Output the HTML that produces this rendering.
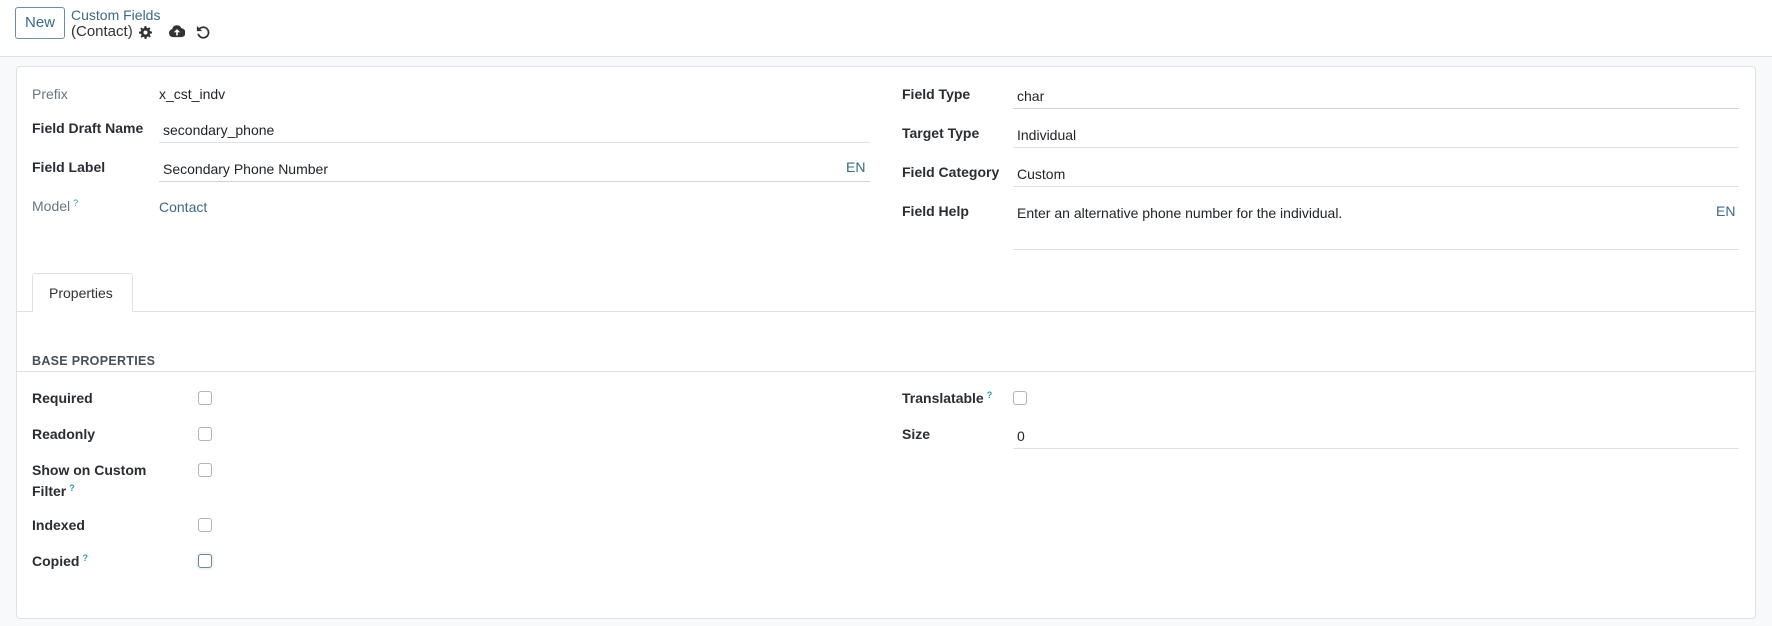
<!DOCTYPE html>
<html><head><meta charset="utf-8">
<style>
*{box-sizing:border-box;margin:0;padding:0}
body{width:1772px;height:626px;overflow:hidden;background:#f8f9fa;font-family:"Liberation Sans",sans-serif;font-size:14px;color:#212529;position:relative}
.hdr{position:absolute;left:0;top:0;width:1772px;height:57px;background:#fff;border-bottom:1px solid #dee2e6}
.card{position:absolute;left:16px;top:66px;width:1740px;height:553px;background:#fff;border:1px solid #dee2e6;border-radius:4px}
.t{position:absolute;line-height:20px;height:20px;white-space:nowrap}
.lb{font-weight:bold;color:#2a2d31}
.g{color:#6c757d}
.lk{color:#3d6a84}
.ul{position:absolute;height:1px;background:#dee2e6}
.q{color:#2a9bb0;font-size:9px;vertical-align:top;position:relative;top:-3px;margin-left:3px}
.cb{position:absolute;width:14px;height:14px;border:1px solid #adb5bd;border-radius:3px;background:#fff}
</style></head><body>
<div class="hdr">
  <div style="position:absolute;left:15px;top:7px;width:50px;height:32px;border:1px solid #6d8ea0;border-radius:3px;color:#3d6a84;font-size:15px;line-height:30px;text-align:center">New</div>
  <div class="t lk" style="left:71px;top:5px">Custom Fields</div>
  <div class="t" style="left:71px;top:22px;font-size:15px;color:#333">(Contact)</div>
  <svg style="position:absolute;left:139px;top:26px" width="13" height="13" viewBox="0 0 16 16"><path fill="#333" d="M7 0h2l.4 2.2 1.5.6 1.8-1.3 1.4 1.4-1.3 1.8.6 1.5L16 7v2l-2.2.4-.6 1.5 1.3 1.8-1.4 1.4-1.8-1.3-1.5.6L9 16H7l-.4-2.2-1.5-.6-1.8 1.3-1.4-1.4 1.3-1.8-.6-1.5L0 9V7l2.2-.4.6-1.5L1.5 3.3l1.4-1.4 1.8 1.3 1.5-.6zM8 5.5A2.5 2.5 0 1 0 8 10.5 2.5 2.5 0 1 0 8 5.5z"/></svg>
  <svg style="position:absolute;left:169px;top:25px" width="16" height="13" viewBox="0 0 20 16"><path fill="#333" d="M5 15a5 5 0 0 1-1-9.9A6 6 0 0 1 15.5 4 5.5 5.5 0 0 1 15 15zM10 5l-4 4h3v4h2V9h3z"/></svg>
  <svg style="position:absolute;left:196px;top:25px" width="14" height="14" viewBox="0 0 16 16"><path fill="none" stroke="#333" stroke-width="2" d="M3.5 5A6 6 0 1 1 2.5 10"/><path fill="#333" d="M1 1v6h6z"/></svg>
</div>
<div class="card"></div>

<div class="t g" style="left:32px;top:84px">Prefix</div>
<div class="t" style="left:159px;top:84px">x_cst_indv</div>
<div class="t lb" style="left:32px;top:118px">Field Draft Name</div>
<div class="t" style="left:163px;top:120px">secondary_phone</div>
<div class="ul" style="left:159px;top:142px;width:711px"></div>
<div class="t lb" style="left:32px;top:157px">Field Label</div>
<div class="t" style="left:163px;top:159px">Secondary Phone Number</div>
<div class="t lk" style="left:846px;top:157px">EN</div>
<div class="ul" style="left:159px;top:181px;width:711px;background:#ced4da"></div>
<div class="t g" style="left:32px;top:196px">Model<span class="q">?</span></div>
<div class="t lk" style="left:159px;top:197px">Contact</div>

<div class="t lb" style="left:902px;top:84px">Field Type</div>
<div class="t" style="left:1017px;top:86px">char</div>
<div class="ul" style="left:1013px;top:108px;width:726px;background:#ced4da"></div>
<div class="t lb" style="left:902px;top:123px">Target Type</div>
<div class="t" style="left:1017px;top:125px">Individual</div>
<div class="ul" style="left:1013px;top:147px;width:726px"></div>
<div class="t lb" style="left:902px;top:162px">Field Category</div>
<div class="t" style="left:1017px;top:164px">Custom</div>
<div class="ul" style="left:1013px;top:186px;width:726px"></div>
<div class="t lb" style="left:902px;top:201px">Field Help</div>
<div class="t" style="left:1017px;top:203px">Enter an alternative phone number for the individual.</div>
<div class="t lk" style="left:1716px;top:201px">EN</div>
<div class="ul" style="left:1013px;top:249px;width:726px"></div>

<div class="ul" style="left:17px;top:311px;width:1738px"></div>
<div style="position:absolute;left:32px;top:273px;width:101px;height:39px;background:#fff;border:1px solid #dee2e6;border-bottom:none;border-radius:3px 3px 0 0"></div>
<div class="t" style="left:49px;top:283px;color:#333">Properties</div>

<div class="t" style="left:32px;top:351px;font-weight:bold;font-size:12.5px;color:#495057;letter-spacing:.3px">BASE PROPERTIES</div>
<div class="ul" style="left:17px;top:371px;width:1738px"></div>

<div class="t lb" style="left:32px;top:388px">Required</div>
<div class="cb" style="left:198px;top:391px"></div>
<div class="t lb" style="left:32px;top:424px">Readonly</div>
<div class="cb" style="left:198px;top:427px"></div>
<div class="t lb" style="left:32px;top:460px">Show on Custom</div>
<div class="t lb" style="left:32px;top:481px">Filter<span class="q">?</span></div>
<div class="cb" style="left:198px;top:463px"></div>
<div class="t lb" style="left:32px;top:515px">Indexed</div>
<div class="cb" style="left:198px;top:518px"></div>
<div class="t lb" style="left:32px;top:551px">Copied<span class="q">?</span></div>
<div class="cb" style="left:198px;top:554px;border-color:#6c8799;box-shadow:0 0 0 2px #eef3f6"></div>

<div class="t lb" style="left:902px;top:388px">Translatable<span class="q">?</span></div>
<div class="cb" style="left:1013px;top:391px"></div>
<div class="t lb" style="left:902px;top:424px">Size</div>
<div class="t" style="left:1017px;top:426px">0</div>
<div class="ul" style="left:1013px;top:448px;width:726px"></div>
</body></html>
